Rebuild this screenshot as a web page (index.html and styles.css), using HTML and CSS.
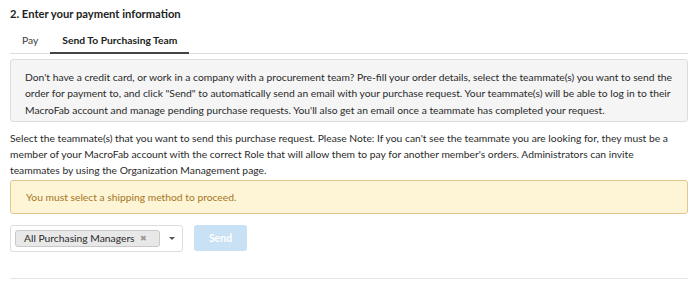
FILE: index.html
```html
<!DOCTYPE html>
<html lang="en">
<head>
  <meta charset="UTF-8" />
  <title>Payment - MacroFab</title>
  <link rel="stylesheet" href="styles.css">
</head>
<body>
  <div class="payment-section">
    <h4 class="step-title">2. Enter your payment information</h4>

    <ul class="tabs">
      <li class="tab">Pay</li>
      <li class="tab active">Send To Purchasing Team</li>
    </ul>

    <div class="info-box">
      Don't have a credit card, or work in a company with a procurement team? Pre-fill your order details, select the teammate(s) you want to send the order for payment to, and click "Send" to automatically send an email with your purchase request. Your teammate(s) will be able to log in to their MacroFab account and manage pending purchase requests. You'll also get an email once a teammate has completed your request.
    </div>

    <p class="help-text">
      Select the teammate(s) that you want to send this purchase request. Please Note: If you can't see the teammate you are looking for, they must be a member of your MacroFab account with the correct Role that will allow them to pay for another member's orders. Administrators can invite teammates by using the Organization Management page.
    </p>

    <div class="alert-warning">You must select a shipping method to proceed.</div>

    <div class="send-row">
      <div class="select">
        <span class="tag">All Purchasing Managers <span class="tag-remove">&#10006;</span></span>
        <span class="caret"></span>
      </div>
      <button class="btn-send" disabled>Send</button>
    </div>

    <hr class="divider">
  </div>
</body>
</html>
```

FILE: styles.css
```css
* { box-sizing: border-box; }
body {
  font-family: 'Lato', 'Liberation Sans', sans-serif;
  font-size: 10.3px;
  color: #2a2a2a;
  background: white;
  margin: 0;
  padding: 0;
}
.payment-section {
  padding: 4px 12px 0 10px;
}
.step-title {
  font-size: 11.2px;
  font-weight: 700;
  margin: 0 0 8px;
  line-height: 20px;
  color: #222;
}
.tabs {
  list-style: none;
  margin: 0;
  padding: 0;
  display: flex;
  border-bottom: 1px solid #ddd;
}
.tab {
  padding: 1px 12px 5px;
  line-height: 14px;
  font-size: 10.3px;
  color: #3a3a3a;
  margin-bottom: -1px;
  border-bottom: 2px solid transparent;
}
.tab.active {
  font-weight: 700;
  color: #222;
  border-bottom-color: #444;
}
.info-box {
  margin-top: 5px;
  background: #f5f5f5;
  border: 1px solid #ddd;
  border-radius: 3px;
  padding: 9px 14px 3px;
  line-height: 16.3px;
}
.help-text {
  margin: 8px 0 2px;
  padding-right: 8px;
  line-height: 16px;
}
.alert-warning {
  background: #fef4d6;
  border: 1px solid #e2c88e;
  border-radius: 3px;
  color: #a5761f;
  padding: 9px 15px;
  line-height: 14px;
}
.send-row {
  display: flex;
  align-items: center;
  gap: 11px;
  margin-top: 11px;
}
.select {
  display: flex;
  align-items: center;
  width: 173px;
  height: 27px;
  border: 1px solid #ddd;
  border-radius: 3px;
  padding: 0 4px;
}
.tag {
  background: #e8e8e8;
  border: 1px solid #c8c8c8;
  border-radius: 3px;
  padding: 0 12px 0 8px;
  line-height: 15px;
  font-size: 10.3px;
  white-space: nowrap;
  color: #2a2a2a;
}
.tag-remove {
  font-size: 7.5px;
  color: #999;
  margin-left: 3px;
  vertical-align: 1px;
}
.caret {
  margin-left: 9px;
  width: 0;
  height: 0;
  border-left: 3px solid transparent;
  border-right: 3px solid transparent;
  border-top: 3px solid #555;
}
.btn-send {
  width: 53px;
  height: 26px;
  border: none;
  border-radius: 3px;
  background: #c8e1f5;
  color: white;
  font-family: inherit;
  font-size: 10.5px;
  font-weight: 700;
}
.divider {
  border: none;
  border-top: 1px solid #e3e3e3;
  margin: 26px 0 0;
}
```
